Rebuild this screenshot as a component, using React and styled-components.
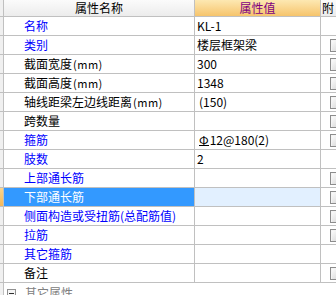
import React from "react";
import styled, { createGlobalStyle, css } from "styled-components";

const Global = createGlobalStyle`
  html, body { margin: 0; padding: 0; background: #ffffff; overflow: hidden; }
  body { font-family: "Noto Sans CJK SC", "Noto Sans", sans-serif; font-size: 12px; }
`;

const LINE = "#c0c0c0";

const Table = styled.div`
  width: 336px;
  height: 295px;
  overflow: hidden;
  background: #ffffff;
`;

const Row = styled.div`
  display: grid;
  grid-template-columns: 4px 191px 126px 15px;
  height: ${(p) => (p.$header ? 17 : 19)}px;
`;

const Cell = styled.div`
  box-sizing: border-box;
  border-right: 1px solid ${LINE};
  border-bottom: 1px solid ${LINE};
  display: flex;
  align-items: center;
  white-space: nowrap;
  overflow: hidden;
  line-height: 1;
  font-size: 12px;
`;

const Gutter = styled(Cell)`
  background: ${(p) => (p.$active ? "linear-gradient(#fcd58a, #f3b85a)" : "#f0f0f0")};
`;

const HeadCell = styled(Cell)`
  justify-content: center;
  font-size: 12px;
  color: ${(p) => (p.$accent ? "#800080" : "#000000")};
  background: ${(p) =>
    p.$accent
      ? "linear-gradient(#fde8b2, #f6c46c)"
      : "linear-gradient(#fbfbfb, #ececec)"};
  ${(p) =>
    p.$left &&
    css`
      justify-content: flex-start;
      padding-left: 1px;
      border-right: none;
    `}
`;

const NameCell = styled(Cell)`
  padding-left: 20px;
  color: ${(p) => (p.$selected ? "#ffffff" : p.$blue ? "#0000ff" : "#000000")};
  background: ${(p) => (p.$selected ? "#3399ff" : "#ffffff")};
`;

const ValueCell = styled(Cell)`
  padding-left: ${(p) => p.$pad ?? 2}px;
  color: #000000;
  background: ${(p) => (p.$selected ? "#e2f0ff" : "#ffffff")};
`;

const ExtraCell = styled(Cell)`
  padding-left: 9px;
  border-right: none;
  background: #ffffff;
`;

const Unit = styled.span`
  font-size: 11px;
  letter-spacing: 0.5px;
  margin-left: 1px;
`;

const Rebar = styled.span`
  display: inline-block;
  font-size: 12px;
  line-height: 11px;
  border-bottom: 1px solid #000000;
  margin-right: 1px;
`;

const Check = styled.span`
  display: inline-block;
  flex: none;
  box-sizing: border-box;
  width: 13px;
  height: 13px;
  border: 1px solid #8c8c8c;
  background: linear-gradient(135deg, #ffffff, #d2d2d2);
  box-shadow: inset 1px 1px 0 #f4f4f4;
`;

const GroupRow = styled.div`
  display: grid;
  grid-template-columns: 4px 1fr;
  height: 19px;
`;

const GroupGutter = styled.div`
  box-sizing: border-box;
  border-right: 1px solid ${LINE};
  background: #f0f0f0;
`;

const GroupLabel = styled.div`
  display: flex;
  align-items: center;
  gap: 9px;
  padding-left: 3px;
  color: #808080;
  font-size: 12px;
`;

const Expander = styled.span`
  box-sizing: border-box;
  width: 9px;
  height: 9px;
  border: 1px solid #909090;
  background: #f4f4f4;
  position: relative;
  margin-top: 2px;
  &::after {
    content: "";
    position: absolute;
    left: 1px;
    right: 1px;
    top: 3px;
    height: 1px;
    background: #303030;
  }
`;

const rows = [
  { name: "名称", blue: true, value: "KL-1", check: false },
  { name: "类别", blue: true, value: "楼层框架梁", check: true },
  { name: "截面宽度", unit: true, value: "300", check: true },
  { name: "截面高度", unit: true, value: "1348", check: true },
  { name: "轴线距梁左边线距离", unit: true, value: "(150)", pad: 4, check: true },
  { name: "跨数量", value: "", check: true },
  { name: "箍筋", blue: true, rebar: true, value: "12@180(2)", pad: 4, check: true },
  { name: "肢数", blue: true, value: "2", check: false },
  { name: "上部通长筋", blue: true, value: "", check: true },
  { name: "下部通长筋", blue: true, value: "", check: true, selected: true },
  { name: "侧面构造或受扭筋(总配筋值)", blue: true, value: "", check: true },
  { name: "拉筋", blue: true, value: "", check: true },
  { name: "其它箍筋", blue: true, value: "", check: false },
  { name: "备注", value: "", check: true },
];

export default function App() {
  return (
    <>
      <Global />
      <Table>
        <Row $header>
          <Gutter />
          <HeadCell>属性名称</HeadCell>
          <HeadCell $accent>属性值</HeadCell>
          <HeadCell $left>附</HeadCell>
        </Row>
        {rows.map((r) => (
          <Row key={r.name}>
            <Gutter $active={r.selected} />
            <NameCell $blue={r.blue} $selected={r.selected}>
              {r.name}
              {r.unit && <Unit>(mm)</Unit>}
            </NameCell>
            <ValueCell $selected={r.selected} $pad={r.pad}>
              {r.rebar && <Rebar>Φ</Rebar>}
              {r.value}
            </ValueCell>
            <ExtraCell>{r.check && <Check />}</ExtraCell>
          </Row>
        ))}
        <GroupRow>
          <GroupGutter />
          <GroupLabel>
            <Expander />
            其它属性
          </GroupLabel>
        </GroupRow>
      </Table>
    </>
  );
}
